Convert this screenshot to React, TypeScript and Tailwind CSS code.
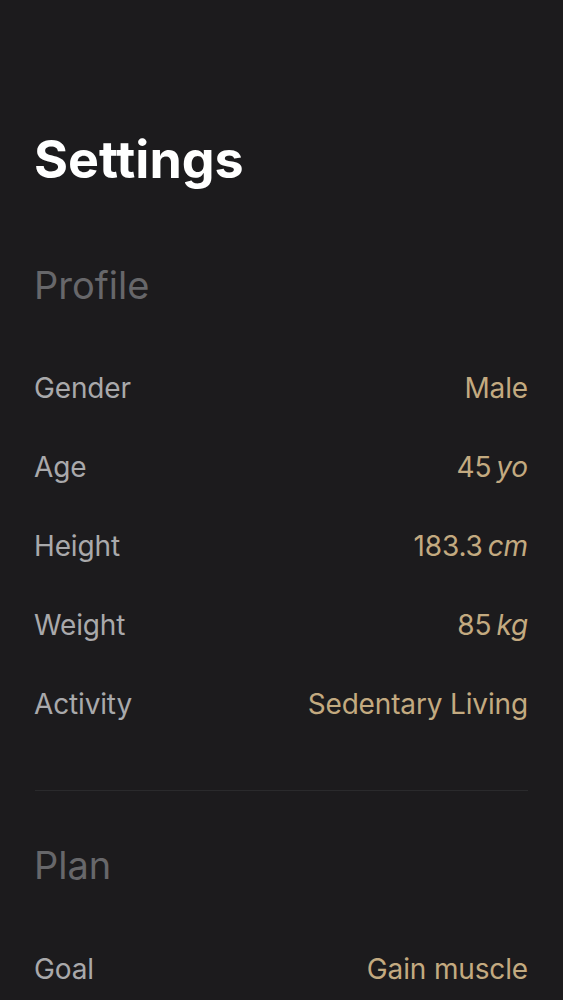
const profile = [
  { label: 'Gender', value: 'Male' },
  { label: 'Age', value: '45', unit: 'yo' },
  { label: 'Height', value: '183.3', unit: 'cm' },
  { label: 'Weight', value: '85', unit: 'kg' },
  { label: 'Activity', value: 'Sedentary Living' },
];

const plan = [{ label: 'Goal', value: 'Gain muscle' }];

type Row = { label: string; value: string; unit?: string };

function SettingRow({ label, value, unit }: Row) {
  return (
    <div className="flex items-center justify-between h-[79px] text-[28px] tracking-[-0.15px]">
      <span className="text-[#a9a9ab]">{label}</span>
      <span className="text-[#c3aa80]">
        {value}
        {unit && <span className="italic ml-[5px]">{unit}</span>}
      </span>
    </div>
  );
}

export default function App() {
  return (
    <div
      className="min-h-[1000px] bg-[#1c1b1d] pl-[34px] pr-[35px] pt-[132px] overflow-hidden"
      style={{ fontFamily: 'Inter, "Noto Sans", sans-serif' }}
    >
      <h1 className="text-[52px] leading-[56px] font-bold text-white">Settings</h1>

      <h2 className="mt-[75px] text-[38px] leading-[44px] text-[#67676a]">Profile</h2>
      <div className="mt-[41px]">
        {profile.map((r) => (
          <SettingRow key={r.label} {...r} />
        ))}
      </div>

      <div className="mt-[47px] ml-[1px] h-px bg-[#2a2a2c]" />

      <h2 className="mt-[52px] text-[38px] leading-[44px] text-[#67676a]">Plan</h2>
      <div className="mt-[42px]">
        {plan.map((r) => (
          <SettingRow key={r.label} {...r} />
        ))}
      </div>
    </div>
  );
}
